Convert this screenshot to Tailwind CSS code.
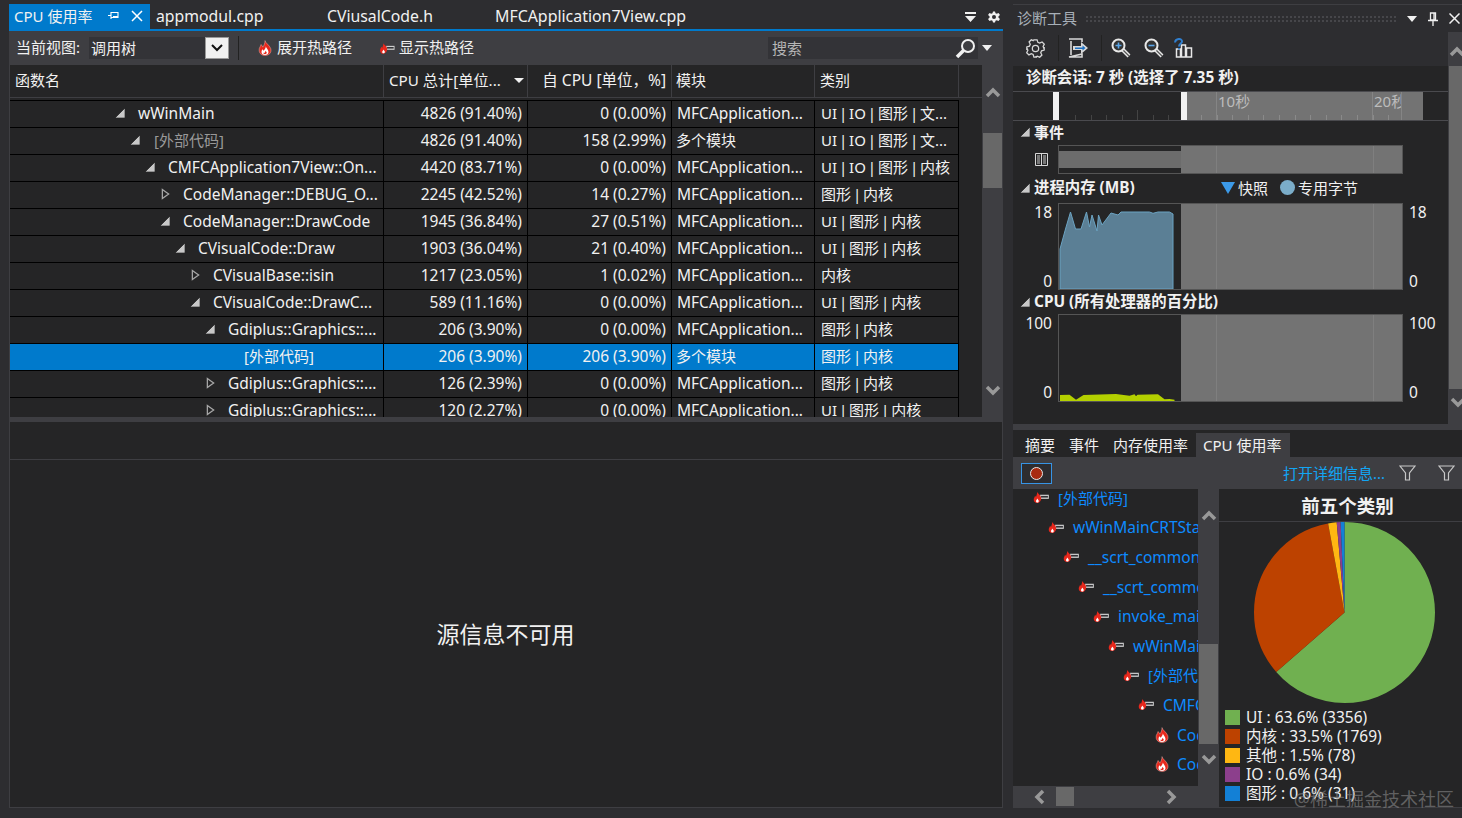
<!DOCTYPE html>
<html lang="zh-CN">
<head>
    <meta charset="UTF-8">
    <title>CPU 使用率</title>
    <script src="https://cdn.jsdelivr.net/npm/@tailwindcss/browser@4"></script>
</head>
<body class="bg-[#2d2d30] overflow-hidden">
    <svg width="0" height="0" class="absolute">
        <symbol id="flame" viewBox="0 0 16 18">
            <path d="M8 .5c.5 3 5 5 6.500 9 1.500 5-2 8-6.500 8S.5 14.500 1.500 9.500C2 8 3 7 3.500 5c1 1 1.500 2 2 3 1.500-2 2.500-4.500 2.500-7.500z" fill="#e8281c" stroke="#f0c4bc" stroke-width=".5"/>
            <path d="M9 7c0 2 3 3.500 3 6.500 0 2-1.500 3.500-4 3.500S4 15.500 4 13.500c0-1 .5-2 1-3l1.500 1.500C7.500 11 9 9 9 7z" fill="#fff"/>
            <path d="M8.500 12c.5 1 1.500 1.500 1.500 2.500 0 1-1 1.500-2 1.500s-2-.5-2-1.500c.5 0 1 .5 1.500 0 .5-1 1-1.500 1-2.500z" fill="#e8281c"/>
        </symbol>
        <symbol id="hot" viewBox="0 0 17 12">
            <path d="M7 3h9.500v4.500H7z" fill="#d0d0d0"/>
            <path d="M8 4.300h7.500v1.800H8z" fill="#333337"/>
            <path d="M4 0c.5 2 3.500 3 4 6 .5 3-1.500 6-4 6S-.5 10 .2 7c.3-1 1-2 1.300-3 .5.5.8 1 1 1.500C3 4 3.700 2 4 0z" fill="#e8281c"/>
            <path d="M4 7c.3 1 1.500 1.500 1.500 2.800C5.500 11 4.800 11.500 4 11.500S2.500 11 2.500 9.800C2.500 9 3.700 8 4 7z" fill="#fff"/>
        </symbol>
        <symbol id="open" viewBox="0 0 10 10"><path d="M0 10 10 0v10z" fill="#c8c8c8" stroke="#111" stroke-width=".6"/></symbol>
        <symbol id="closed" viewBox="0 0 10 12"><path d="M1.500 1 8.500 6 1.500 11z" fill="none" stroke="#a8a8a8" stroke-width="1.400"/></symbol>
        <symbol id="up" viewBox="0 0 16 11"><path d="M2 9 8 3l6 6" fill="none" stroke="#999" stroke-width="3.500"/></symbol>
        <symbol id="down" viewBox="0 0 16 11"><path d="M2 2l6 6 6-6" fill="none" stroke="#999" stroke-width="3.500"/></symbol>
        <symbol id="funnel" viewBox="0 0 17 16"><path d="M1 1h15l-5.500 7v7h-4V8z" fill="none" stroke="#c8c8c8" stroke-width="1.200"/></symbol>
    </svg>

    <div class="flex w-[1462px] h-[818px] pt-1 gap-[10px] font-['Noto_Sans','Noto_Sans_CJK_SC',sans-serif] text-[15.5px] leading-5 text-[#f1f1f1]">

        <!-- Left document panel -->
        <div class="ml-[9px] w-[994px] h-[804px] flex flex-col">
            <!-- Tabs -->
            <div class="flex items-center h-[25px] shrink-0 relative">
                <div class="flex items-center w-[141px] h-full bg-[#007acc] pl-[5px] pb-[2px]">
                    <span class="w-[94px] text-[15px]">CPU 使用率</span>
                    <svg class="w-[11px] h-[11px] mr-[12px]" viewBox="0 0 11 11"><path d="M0 5.500h3M3 2.500h7v5H3zM3 2v7M5 6.500h5" fill="none" stroke="#fff" stroke-width="1.100"/></svg>
                    <svg class="w-3 h-3" viewBox="0 0 12 12"><path d="M1 1l10 10M11 1 1 11" stroke="#fff" stroke-width="1.500"/></svg>
                </div>
                <span class="ml-[6px] w-[171px] text-[15.8px] pb-[2px]">appmodul.cpp</span>
                <span class="w-[168px] text-[15.8px] pb-[2px]">CViusalCode.h</span>
                <span class="text-[15.9px] pb-[2px]">MFCApplication7View.cpp</span>
                <svg class="ml-auto w-[11px] h-[11px] mr-[12px]" viewBox="0 0 11 11"><path d="M0 1h11v2H0zM0 5h11L5.500 11z" fill="#f1f1f1"/></svg>
                <svg class="w-3 h-3 mr-[3px]" viewBox="0 0 24 24"><path fill-rule="evenodd" d="M10 1h4l1 3.500 2.500 1L21 4l3 4-3 2.500v3L24 16l-3 4-3.500-1.500-2.500 1L14 23h-4l-1-3.500-2.500-1L3 20l-3-4 3-2.500v-3L0 8l3-4 3.500 1.500 2.500-1zM12 8a4 4 0 1 0 0 8 4 4 0 0 0 0-8z" fill="#f1f1f1"/></svg>
            </div>
            <div class="h-[2px] shrink-0 bg-[#007acc]"></div>

            <!-- Toolbar -->
            <div class="flex items-center h-[34px] shrink-0 bg-[#3e3e42] pl-[7px] text-[15px]">
                <span class="w-[73px] pb-[2px]">当前视图:</span>
                <div class="flex items-center justify-between w-[140px] h-[22px] bg-[#333337] pl-[2px]">
                    <span class="pb-[1px]">调用树</span>
                    <span class="flex items-center justify-center w-6 h-[22px] bg-[#f1f1f1] border border-[#999]">
                        <svg class="w-[14px] h-[10px]" viewBox="0 0 14 10"><path d="M2 2l5 5 5-5" fill="none" stroke="#111" stroke-width="2"/></svg>
                    </span>
                </div>
                <div class="w-px h-[24px] bg-[#222] ml-[9px] mr-[19px]"></div>
                <svg class="w-[14px] h-[16px] mr-[5px] shrink-0"><use href="#flame"/></svg>
                <span class="w-[103px] pb-[2px]">展开热路径</span>
                <svg class="w-[15px] h-[11px] mr-[4px]"><use href="#hot"/></svg>
                <span class="w-[369px] pb-[2px]">显示热路径</span>
                <div class="flex items-center justify-between w-[210px] h-[22px] bg-[#333337] pl-[4px] pr-[2px] text-[#b5b5b5]">
                    <span class="pb-[1px]">搜索</span>
                    <svg class="w-[21px] h-[21px]" viewBox="0 0 21 21"><circle cx="13" cy="8" r="6" fill="#3e3e42" stroke="#f1f1f1" stroke-width="2"/><path d="M8.500 12.500 2 19" stroke="#f1f1f1" stroke-width="3.500"/></svg>
                </div>
                <svg class="w-[10px] h-[6px] ml-1" viewBox="0 0 10 6"><path d="M0 0h10L5 6z" fill="#f1f1f1"/></svg>
            </div>

            <!-- Call tree -->
            <div class="flex h-[352px] shrink-0">
                <div class="w-[973px] shrink-0 flex flex-col bg-[#252526] border-l border-[#3e3e42]">
                    <div class="grid grid-cols-[374px_144px_144px_143px_144px_1fr] h-[33px] shrink-0 border-b border-[#3e3e42] items-center text-[15px]">
                        <div class="h-full flex items-center pl-[5px] pb-[2px] border-r border-[#3e3e42]">函数名</div>
                        <div class="h-full flex items-center pl-[5px] pb-[2px] border-r border-[#3e3e42]"><span class="w-[125px] whitespace-nowrap text-[15.2px]">CPU 总计[单位...</span><svg class="w-[10px] h-[5px]" viewBox="0 0 10 5"><path d="M0 0h10L5 5z" fill="#f1f1f1"/></svg></div>
                        <div class="h-full flex items-center justify-end pr-[5px] pb-[2px] border-r border-[#3e3e42] whitespace-nowrap text-[15.5px]">自 CPU [单位，%]</div>
                        <div class="h-full flex items-center pl-[4px] pb-[2px] border-r border-[#3e3e42]">模块</div>
                        <div class="h-full flex items-center pl-[5px] pb-[2px] border-r border-[#3e3e42]">类别</div>
                        <div></div>
                    </div>
                    <div class="h-[2px] shrink-0"></div>
                    <div class="w-[949px] overflow-hidden flex-1 border-t border-black whitespace-nowrap">
                        <div class="grid grid-cols-[374px_144px_144px_143px_144px] h-[27px] border-b border-black items-center">
                            <div class="flex items-center h-full pb-[3px] border-r border-black pl-[105px]"><svg class="w-[10px] h-[10px] mr-[13px]"><use href="#open"/></svg>wWinMain</div>
                            <div class="h-full flex items-center justify-end pb-[3px] pr-[5px] border-r border-black">4826 (91.40%)</div>
                            <div class="h-full flex items-center justify-end pb-[3px] pr-[5px] border-r border-black">0 (0.00%)</div>
                            <div class="h-full flex items-center pb-[3px] pl-[5px] border-r border-black">MFCApplication...</div>
                            <div class="h-full flex items-center pb-[3px] pl-[6px] border-r border-black text-[15px] [word-spacing:-2px]">UI | IO | 图形 | 文...</div>
                        </div>
                        <div class="grid grid-cols-[374px_144px_144px_143px_144px] h-[27px] border-b border-black items-center">
                            <div class="flex items-center h-full pb-[3px] border-r border-black pl-[120px] text-[#999] text-[15px]"><svg class="w-[10px] h-[10px] mr-[14px]"><use href="#open"/></svg>[外部代码]</div>
                            <div class="h-full flex items-center justify-end pb-[3px] pr-[5px] border-r border-black">4826 (91.40%)</div>
                            <div class="h-full flex items-center justify-end pb-[3px] pr-[5px] border-r border-black">158 (2.99%)</div>
                            <div class="h-full flex items-center pb-[3px] pl-[4px] border-r border-black text-[15px]">多个模块</div>
                            <div class="h-full flex items-center pb-[3px] pl-[6px] border-r border-black text-[15px] [word-spacing:-2px]">UI | IO | 图形 | 文...</div>
                        </div>
                        <div class="grid grid-cols-[374px_144px_144px_143px_144px] h-[27px] border-b border-black items-center">
                            <div class="flex items-center h-full pb-[3px] border-r border-black pl-[135px]"><svg class="w-[10px] h-[10px] mr-[13px]"><use href="#open"/></svg>CMFCApplication7View::On...</div>
                            <div class="h-full flex items-center justify-end pb-[3px] pr-[5px] border-r border-black">4420 (83.71%)</div>
                            <div class="h-full flex items-center justify-end pb-[3px] pr-[5px] border-r border-black">0 (0.00%)</div>
                            <div class="h-full flex items-center pb-[3px] pl-[5px] border-r border-black">MFCApplication...</div>
                            <div class="h-full flex items-center pb-[3px] pl-[6px] border-r border-black text-[15px] [word-spacing:-2px]">UI | IO | 图形 | 内核</div>
                        </div>
                        <div class="grid grid-cols-[374px_144px_144px_143px_144px] h-[27px] border-b border-black items-center">
                            <div class="flex items-center h-full pb-[3px] border-r border-black pl-[151px]"><svg class="w-[9px] h-[12px] mr-[13px]"><use href="#closed"/></svg>CodeManager::DEBUG_O...</div>
                            <div class="h-full flex items-center justify-end pb-[3px] pr-[5px] border-r border-black">2245 (42.52%)</div>
                            <div class="h-full flex items-center justify-end pb-[3px] pr-[5px] border-r border-black">14 (0.27%)</div>
                            <div class="h-full flex items-center pb-[3px] pl-[5px] border-r border-black">MFCApplication...</div>
                            <div class="h-full flex items-center pb-[3px] pl-[6px] border-r border-black text-[15px] [word-spacing:-2px]">图形 | 内核</div>
                        </div>
                        <div class="grid grid-cols-[374px_144px_144px_143px_144px] h-[27px] border-b border-black items-center">
                            <div class="flex items-center h-full pb-[3px] border-r border-black pl-[150px]"><svg class="w-[10px] h-[10px] mr-[13px]"><use href="#open"/></svg>CodeManager::DrawCode</div>
                            <div class="h-full flex items-center justify-end pb-[3px] pr-[5px] border-r border-black">1945 (36.84%)</div>
                            <div class="h-full flex items-center justify-end pb-[3px] pr-[5px] border-r border-black">27 (0.51%)</div>
                            <div class="h-full flex items-center pb-[3px] pl-[5px] border-r border-black">MFCApplication...</div>
                            <div class="h-full flex items-center pb-[3px] pl-[6px] border-r border-black text-[15px] [word-spacing:-2px]">UI | 图形 | 内核</div>
                        </div>
                        <div class="grid grid-cols-[374px_144px_144px_143px_144px] h-[27px] border-b border-black items-center">
                            <div class="flex items-center h-full pb-[3px] border-r border-black pl-[165px]"><svg class="w-[10px] h-[10px] mr-[13px]"><use href="#open"/></svg>CVisualCode::Draw</div>
                            <div class="h-full flex items-center justify-end pb-[3px] pr-[5px] border-r border-black">1903 (36.04%)</div>
                            <div class="h-full flex items-center justify-end pb-[3px] pr-[5px] border-r border-black">21 (0.40%)</div>
                            <div class="h-full flex items-center pb-[3px] pl-[5px] border-r border-black">MFCApplication...</div>
                            <div class="h-full flex items-center pb-[3px] pl-[6px] border-r border-black text-[15px] [word-spacing:-2px]">UI | 图形 | 内核</div>
                        </div>
                        <div class="grid grid-cols-[374px_144px_144px_143px_144px] h-[27px] border-b border-black items-center">
                            <div class="flex items-center h-full pb-[3px] border-r border-black pl-[181px]"><svg class="w-[9px] h-[12px] mr-[13px]"><use href="#closed"/></svg>CVisualBase::isin</div>
                            <div class="h-full flex items-center justify-end pb-[3px] pr-[5px] border-r border-black">1217 (23.05%)</div>
                            <div class="h-full flex items-center justify-end pb-[3px] pr-[5px] border-r border-black">1 (0.02%)</div>
                            <div class="h-full flex items-center pb-[3px] pl-[5px] border-r border-black">MFCApplication...</div>
                            <div class="h-full flex items-center pb-[3px] pl-[6px] border-r border-black text-[15px]">内核</div>
                        </div>
                        <div class="grid grid-cols-[374px_144px_144px_143px_144px] h-[27px] border-b border-black items-center">
                            <div class="flex items-center h-full pb-[3px] border-r border-black pl-[180px]"><svg class="w-[10px] h-[10px] mr-[13px]"><use href="#open"/></svg>CVisualCode::DrawC...</div>
                            <div class="h-full flex items-center justify-end pb-[3px] pr-[5px] border-r border-black">589 (11.16%)</div>
                            <div class="h-full flex items-center justify-end pb-[3px] pr-[5px] border-r border-black">0 (0.00%)</div>
                            <div class="h-full flex items-center pb-[3px] pl-[5px] border-r border-black">MFCApplication...</div>
                            <div class="h-full flex items-center pb-[3px] pl-[6px] border-r border-black text-[15px] [word-spacing:-2px]">UI | 图形 | 内核</div>
                        </div>
                        <div class="grid grid-cols-[374px_144px_144px_143px_144px] h-[27px] border-b border-black items-center">
                            <div class="flex items-center h-full pb-[3px] border-r border-black pl-[195px]"><svg class="w-[10px] h-[10px] mr-[13px]"><use href="#open"/></svg>Gdiplus::Graphics::...</div>
                            <div class="h-full flex items-center justify-end pb-[3px] pr-[5px] border-r border-black">206 (3.90%)</div>
                            <div class="h-full flex items-center justify-end pb-[3px] pr-[5px] border-r border-black">0 (0.00%)</div>
                            <div class="h-full flex items-center pb-[3px] pl-[5px] border-r border-black">MFCApplication...</div>
                            <div class="h-full flex items-center pb-[3px] pl-[6px] border-r border-black text-[15px] [word-spacing:-2px]">图形 | 内核</div>
                        </div>
                        <div class="grid grid-cols-[374px_144px_144px_143px_144px] h-[27px] border-b border-black items-center bg-[#007acc]">
                            <div class="flex items-center h-full pb-[3px] border-r border-black pl-[234px] text-[15px]">[外部代码]</div>
                            <div class="h-full flex items-center justify-end pb-[3px] pr-[5px] border-r border-black">206 (3.90%)</div>
                            <div class="h-full flex items-center justify-end pb-[3px] pr-[5px] border-r border-black">206 (3.90%)</div>
                            <div class="h-full flex items-center pb-[3px] pl-[4px] border-r border-black text-[15px]">多个模块</div>
                            <div class="h-full flex items-center pb-[3px] pl-[6px] border-r border-black text-[15px] [word-spacing:-2px]">图形 | 内核</div>
                        </div>
                        <div class="grid grid-cols-[374px_144px_144px_143px_144px] h-[27px] border-b border-black items-center">
                            <div class="flex items-center h-full pb-[3px] border-r border-black pl-[196px]"><svg class="w-[9px] h-[12px] mr-[13px]"><use href="#closed"/></svg>Gdiplus::Graphics::...</div>
                            <div class="h-full flex items-center justify-end pb-[3px] pr-[5px] border-r border-black">126 (2.39%)</div>
                            <div class="h-full flex items-center justify-end pb-[3px] pr-[5px] border-r border-black">0 (0.00%)</div>
                            <div class="h-full flex items-center pb-[3px] pl-[5px] border-r border-black">MFCApplication...</div>
                            <div class="h-full flex items-center pb-[3px] pl-[6px] border-r border-black text-[15px] [word-spacing:-2px]">图形 | 内核</div>
                        </div>
                        <div class="grid grid-cols-[374px_144px_144px_143px_144px] h-[27px] border-b border-black items-center">
                            <div class="flex items-center h-full pb-[3px] border-r border-black pl-[196px]"><svg class="w-[9px] h-[12px] mr-[13px]"><use href="#closed"/></svg>Gdiplus::Graphics::...</div>
                            <div class="h-full flex items-center justify-end pb-[3px] pr-[5px] border-r border-black">120 (2.27%)</div>
                            <div class="h-full flex items-center justify-end pb-[3px] pr-[5px] border-r border-black">0 (0.00%)</div>
                            <div class="h-full flex items-center pb-[3px] pl-[5px] border-r border-black">MFCApplication...</div>
                            <div class="h-full flex items-center pb-[3px] pl-[6px] border-r border-black text-[15px] [word-spacing:-2px]">UI | 图形 | 内核</div>
                        </div>
                    </div>
                </div>
                <!-- Scrollbar -->
                <div class="w-[21px] bg-[#3e3e42] flex flex-col items-center">
                    <svg class="w-4 h-[11px] mt-[22px] shrink-0"><use href="#up"/></svg>
                    <div class="w-[19px] h-[55px] bg-[#686868] mt-[35px] shrink-0"></div>
                    <svg class="w-4 h-[11px] mt-[197px] shrink-0"><use href="#down"/></svg>
                </div>
            </div>

            <!-- Source panel -->
            <div class="h-[5px] shrink-0 bg-[#3e3e42]"></div>
            <div class="flex-1 flex flex-col bg-[#252526] border-l border-r border-b border-[#3e3e42]">
                <div class="h-[38px] shrink-0 border-b border-[#3e3e42]"></div>
                <div class="flex-1 flex items-center justify-center text-[23px] pt-[1px] pr-[1px]">源信息不可用</div>
            </div>
        </div>

        <!-- Right diagnostics panel -->
        <div class="w-[449px] h-[804px] flex flex-col">
            <div class="flex items-center h-[28px] shrink-0 border-t border-[#3e3e42] pl-1 text-[#a8b0b8] text-[15px]">
                <span class="w-[68px] pb-[2px]">诊断工具</span>
                <div class="w-[311px] h-[7px] bg-[radial-gradient(#46464a_1px,transparent_1px)] bg-[length:4px_4px]"></div>
                <svg class="w-[10px] h-[6px] ml-[11px]" viewBox="0 0 10 6"><path d="M0 0h10L5 6z" fill="#f1f1f1"/></svg>
                <svg class="w-[10px] h-[14px] ml-[11px]" viewBox="0 0 10 14"><path d="M2.500 1h5v7h-5zM0 8.500h10M5 9v5M6 1v7" fill="none" stroke="#f1f1f1" stroke-width="1.300"/></svg>
                <svg class="w-[11px] h-[11px] ml-[11px]" viewBox="0 0 11 11"><path d="M.5.500l10 10M10.500.500l-10 10" stroke="#f1f1f1" stroke-width="1.500"/></svg>
            </div>

            <div class="flex h-[392px] shrink-0">
                <div class="w-[435px] flex flex-col">
                    <!-- Diagnostics toolbar -->
                    <div class="flex items-center h-[34px] shrink-0 pl-[13px] pb-[2px]">
                        <svg class="w-[19px] h-[19px]" viewBox="0 0 24 24"><path fill-rule="evenodd" d="M10 1h4l1 3.200 2.300 1 3-1.500 2.800 2.800-1.500 3 1 2.300L23 10v4l-3.400 1-1 2.300 1.500 3-2.800 2.800-3-1.500-2.300 1L14 23h-4l-1-3.400-2.300-1-3 1.500-2.800-2.800 1.500-3-1-2.300L1 14v-4l3.400-1 1-2.300-1.500-3 2.800-2.800 3 1.500L9 2z" fill="none" stroke="#d8d8d8" stroke-width="1.600"/><circle cx="12" cy="12" r="4" fill="none" stroke="#d8d8d8" stroke-width="1.600"/></svg>
                        <div class="w-px h-[26px] bg-[#222] ml-[13px] mr-[9px]"></div>
                        <svg class="w-[20px] h-[20px]" viewBox="0 0 20 20"><path d="M1 1h13v3M14 16v3H1zM3 3v14" fill="none" stroke="#d8d8d8" stroke-width="1.600"/><path d="M5 8h8V4l7 6-7 6v-4H5z" fill="#d8d8d8"/><path d="M7 9.500h7.500V7.500l3 2.500-3 2.500v-1.500H7z" fill="#1b6fc2"/></svg>
                        <div class="w-px h-[26px] bg-[#222] ml-[13px] mr-[9px]"></div>
                        <svg class="w-[20px] h-[20px]" viewBox="0 0 20 20"><path d="M11.500 11.500 18 18" stroke="#e8e8e8" stroke-width="4"/><path d="M12 12l6 6" stroke="#555" stroke-width="1.200"/><circle cx="7.500" cy="7.500" r="6" fill="#333" stroke="#e8e8e8" stroke-width="2"/><path d="M4.500 7.500h6M7.500 4.500v6" stroke="#5aa5e8" stroke-width="1.600"/></svg>
                        <svg class="w-[20px] h-[20px] ml-[13px]" viewBox="0 0 20 20"><path d="M11.500 11.500 18 18" stroke="#e8e8e8" stroke-width="4"/><path d="M12 12l6 6" stroke="#555" stroke-width="1.200"/><circle cx="7.500" cy="7.500" r="6" fill="#333" stroke="#e8e8e8" stroke-width="2"/><path d="M4.500 7.500h6" stroke="#5aa5e8" stroke-width="1.600"/></svg>
                        <svg class="w-[20px] h-[20px] ml-[10px]" viewBox="0 0 20 20"><path d="M2.500 11h4v8h-4zM7.500 7h4v12h-4zM12.500 10h5v9h-5z" fill="#2d2d30" stroke="#e8e8e8" stroke-width="1.500"/><path d="M1 4.500C1.500 0 8 0 8 3.500 8 5.500 5 5.500 5 8.500M5 10v1.500" fill="none" stroke="#2f7fd0" stroke-width="2"/></svg>
                    </div>
                    <div class="h-[25px] shrink-0 bg-[#252526] pl-[13px] pb-[2px] flex items-center font-bold text-[15.4px]">诊断会话: 7 秒 (选择了 7.35 秒)</div>

                    <div class="flex-1 flex flex-col bg-[#252526]">
                        <!-- Ruler -->
                        <div class="h-[30px] shrink-0 border-y border-[#4a4a4e] flex pl-[40px]">
                            <div class="w-[6px] bg-[#f1f1f1]"></div>
                            <div class="w-[122px] flex items-end justify-between pl-[16px] pr-[12px]">
                                <span class="w-px h-[5px] bg-[#444]"></span><span class="w-px h-[5px] bg-[#444]"></span><span class="w-px h-[5px] bg-[#444]"></span><span class="w-px h-[5px] bg-[#444]"></span><span class="w-px h-[10px] bg-[#444]"></span><span class="w-px h-[5px] bg-[#444]"></span><span class="w-px h-[5px] bg-[#444]"></span>
                            </div>
                            <div class="w-[6px] bg-[#f1f1f1]"></div>
                            <div class="relative w-[236px] bg-[#737373] flex text-[#bcbcbc] text-[15px] leading-[18px]">
                                <div class="w-[30px] border-r border-[#858585]"></div>
                                <div class="w-[156px] pl-[1px] border-r border-[#858585]">10秒</div>
                                <div class="w-[29px] pl-[1px] border-r border-[#858585] overflow-hidden whitespace-nowrap">20秒</div>
                                <div class="absolute left-[14px] bottom-0 w-[202px] h-[5px] bg-[repeating-linear-gradient(to_right,#8a8a8a_0,#8a8a8a_1px,transparent_1px,transparent_15.6px)]"></div>
                            </div>
                        </div>

                        <div class="flex items-center h-[24px] shrink-0 pl-[7px] pb-[2px] font-bold text-[15px]"><svg class="w-[10px] h-[10px] mr-[4px]"><use href="#open"/></svg>事件</div>
                        <div class="flex h-[29px] shrink-0">
                            <div class="w-[45px] flex justify-end items-center pr-[10px]">
                                <svg class="w-[13px] h-[13px]" viewBox="0 0 13 13"><path d="M.5.500h12v12H.5zM6.500.500v12" fill="none" stroke="#d8d8d8"/><path d="M2 2h3v9H2zM8 2h3v9H8z" fill="#777"/></svg>
                            </div>
                            <div class="w-[345px] flex border border-[#555]">
                                <div class="w-[122px] flex items-center"><div class="w-full h-[17px] bg-[#6c6c6c]"></div></div>
                                <div class="flex-1 bg-[#737373] flex">
                                    <div class="w-[36px] border-r border-[#7f7f7f]"></div>
                                    <div class="w-[157px] border-r border-[#7f7f7f]"></div>
                                </div>
                            </div>
                        </div>

                        <div class="flex items-center h-[29px] shrink-0 pl-[7px] pb-[2px] text-[15px]">
                            <svg class="w-[10px] h-[10px] mr-[4px] mt-[1px]"><use href="#open"/></svg>
                            <span class="font-bold w-[187px] text-[15.4px]">进程内存 (MB)</span>
                            <svg class="w-[14px] h-[12px] mr-[3px]" viewBox="0 0 14 12"><path d="M0 0h14L7 12z" fill="#3c9ae8"/></svg>
                            <span class="w-[42px]">快照</span>
                            <span class="w-[15px] h-[15px] rounded-full bg-[#7badc9] mr-[3px]"></span>
                            <span>专用字节</span>
                        </div>
                        <div class="flex h-[87px] shrink-0 items-start">
                            <div class="w-[39px] h-[89px] -mt-[1px] flex flex-col justify-between items-end"><span>18</span><span>0</span></div>
                            <div class="w-[345px] h-[87px] ml-[6px] flex border border-[#555]">
                                <svg class="w-[122px] h-[85px]" viewBox="0 0 122 85"><path d="M1 85V45L6.500 25 11.500 8 16.500 25H22L27.500 8 30.500 23 33 11 38 27 39.500 11 43 21 52 9 59 11 62 8H90.500L94 9.300 99 8H110.500L114 10V85z" fill="#5b7f95" stroke="#6ba3c2" stroke-width="1"/></svg>
                                <div class="flex-1 bg-[#737373] flex">
                                    <div class="w-[36px] border-r border-[#7f7f7f]"></div>
                                    <div class="w-[157px] border-r border-[#7f7f7f]"></div>
                                </div>
                            </div>
                            <div class="h-[89px] -mt-[1px] ml-[6px] flex flex-col justify-between"><span>18</span><span>0</span></div>
                        </div>

                        <div class="flex items-center h-[24px] shrink-0 pl-[7px] font-bold text-[15.4px]"><svg class="w-[10px] h-[10px] mr-[4px]"><use href="#open"/></svg>CPU (所有处理器的百分比)</div>
                        <div class="flex h-[88px] shrink-0 items-start">
                            <div class="w-[39px] h-[89px] -mt-[1px] flex flex-col justify-between items-end"><span>100</span><span>0</span></div>
                            <div class="w-[345px] h-[88px] ml-[6px] flex border border-[#555]">
                                <svg class="w-[122px] h-[86px]" viewBox="0 0 122 86"><path d="M1 86V80L10.500 79.700 17 84.700 24.500 80 57 79 70.500 80.700 75.500 79.300 77 81.300 78.500 79.700 99 79.300 105.500 84.300 110.500 84 115.500 84.700V86z" fill="#b4d000"/></svg>
                                <div class="flex-1 bg-[#737373] flex">
                                    <div class="w-[36px] border-r border-[#7f7f7f]"></div>
                                    <div class="w-[157px] border-r border-[#7f7f7f]"></div>
                                </div>
                            </div>
                            <div class="h-[89px] -mt-[1px] ml-[6px] flex flex-col justify-between"><span>100</span><span>0</span></div>
                        </div>
                    </div>
                </div>
                <!-- Scrollbar -->
                <div class="w-[14px] bg-[#3e3e42] flex flex-col items-start overflow-hidden">
                    <svg class="w-4 h-[11px] mt-[14px] ml-[1px] shrink-0"><use href="#up"/></svg>
                    <div class="w-[13px] h-[323px] bg-[#686868] mt-[9px] ml-[1px] shrink-0"></div>
                    <svg class="w-4 h-[11px] mt-[8px] ml-[2px] shrink-0"><use href="#down"/></svg>
                </div>
            </div>

            <div class="h-[6px] shrink-0 bg-[#3e3e42]"></div>

            <!-- Lower tabs -->
            <div class="flex items-end h-[27px] shrink-0 bg-[#252526] pl-3 text-[15px]">
                <span class="w-[44px] h-[24px] flex items-center pb-[1px]">摘要</span>
                <span class="w-[44px] h-[24px] flex items-center pb-[1px]">事件</span>
                <span class="w-[83px] h-[24px] flex items-center pb-[1px]">内存使用率</span>
                <span class="w-[94px] h-[24px] flex items-center pl-[7px] pb-[1px] bg-[#3e3e42]">CPU 使用率</span>
            </div>
            <div class="flex items-center h-[32px] shrink-0 bg-[#3e3e42] pl-2">
                <div class="flex items-center justify-center w-[31px] h-[21px] bg-[#2d2d30] border border-[#3794e5]">
                    <span class="w-[13px] h-[13px] rounded-full bg-[#a82a10] border border-[#e8e8e8]"></span>
                </div>
                <span class="ml-[231px] w-[116px] text-[#12a5f4] text-[15px]">打开详细信息...</span>
                <svg class="w-[17px] h-[16px]"><use href="#funnel"/></svg>
                <svg class="w-[17px] h-[16px] ml-[22px]"><use href="#funnel"/></svg>
            </div>

            <!-- Hot path + chart -->
            <div class="flex h-[319px] shrink-0 border-b border-[#3e3e42]">
                <div class="w-[206px] flex flex-col shrink-0">
                    <div class="flex h-[298px]">
                        <div class="w-[185px] bg-[#252526] overflow-hidden whitespace-nowrap text-[#0e8bff] flex flex-col">
                            <div class="flex items-center h-[29.6px] shrink-0 pl-[20px] -mt-[6px] text-[15px]"><svg class="w-[17px] h-[11px] mr-2 shrink-0"><use href="#hot"/></svg>[外部代码]</div>
                            <div class="flex items-center h-[29.6px] shrink-0 pl-[35px]"><svg class="w-[17px] h-[11px] mr-2 shrink-0"><use href="#hot"/></svg>wWinMainCRTStartup</div>
                            <div class="flex items-center h-[29.6px] shrink-0 pl-[50px]"><svg class="w-[17px] h-[11px] mr-2 shrink-0"><use href="#hot"/></svg>__scrt_common_main</div>
                            <div class="flex items-center h-[29.6px] shrink-0 pl-[65px]"><svg class="w-[17px] h-[11px] mr-2 shrink-0"><use href="#hot"/></svg>__scrt_common_main_seh</div>
                            <div class="flex items-center h-[29.6px] shrink-0 pl-[80px]"><svg class="w-[17px] h-[11px] mr-2 shrink-0"><use href="#hot"/></svg>invoke_main</div>
                            <div class="flex items-center h-[29.6px] shrink-0 pl-[95px]"><svg class="w-[17px] h-[11px] mr-2 shrink-0"><use href="#hot"/></svg>wWinMain</div>
                            <div class="flex items-center h-[29.6px] shrink-0 pl-[110px] text-[15px]"><svg class="w-[17px] h-[11px] mr-2 shrink-0"><use href="#hot"/></svg>[外部代码]</div>
                            <div class="flex items-center h-[29.6px] shrink-0 pl-[125px]"><svg class="w-[17px] h-[11px] mr-2 shrink-0"><use href="#hot"/></svg>CMFCApplication7View</div>
                            <div class="flex items-center h-[29.6px] shrink-0 pl-[142px]"><svg class="w-[14px] h-[16px] mr-[8px] shrink-0"><use href="#flame"/></svg>CodeManager</div>
                            <div class="flex items-center h-[29.6px] shrink-0 pl-[142px]"><svg class="w-[14px] h-[16px] mr-[8px] shrink-0"><use href="#flame"/></svg>CodeManager</div>
                        </div>
                        <div class="w-[21px] bg-[#3e3e42] flex flex-col items-center">
                            <svg class="w-4 h-[11px] mt-[21px] shrink-0"><use href="#up"/></svg>
                            <div class="w-[19px] h-[100px] bg-[#686868] mt-[123px] shrink-0"></div>
                            <svg class="w-4 h-[11px] mt-[10px] shrink-0"><use href="#down"/></svg>
                        </div>
                    </div>
                    <div class="h-[21px] bg-[#3e3e42] flex items-center pl-[21px]">
                        <svg class="w-[11px] h-[16px]" viewBox="0 0 11 16"><path d="M9 2 3 8l6 6" fill="none" stroke="#999" stroke-width="3.500"/></svg>
                        <div class="w-[18px] h-[19px] bg-[#686868] ml-[11px]"></div>
                        <svg class="w-[11px] h-[16px] ml-[92px]" viewBox="0 0 11 16"><path d="M2 2l6 6-6 6" fill="none" stroke="#999" stroke-width="3.500"/></svg>
                    </div>
                </div>
                <div class="relative flex-1 flex flex-col bg-[#252526]">
                    <div class="h-[33px] shrink-0 border-b border-[#3e3e42] flex items-center justify-center pl-[14px] pt-[2px] font-bold text-[18.5px]">前五个类别</div>
                    <svg class="w-[181px] h-[181px] ml-[35px] shrink-0" viewBox="0 0 182 182">
                        <g fill="none" stroke-width="91" transform="rotate(-90 91 91)">
                            <circle cx="91" cy="91" r="45.500" pathLength="100" stroke="#70b050" stroke-dasharray="63.600 100"/>
                            <circle cx="91" cy="91" r="45.500" pathLength="100" stroke="#bd4200" stroke-dasharray="33.500 100" stroke-dashoffset="-63.600"/>
                            <circle cx="91" cy="91" r="45.500" pathLength="100" stroke="#ffb712" stroke-dasharray="1.500 100" stroke-dashoffset="-97.100"/>
                            <circle cx="91" cy="91" r="45.500" pathLength="100" stroke="#8c3f8c" stroke-dasharray="0.700 100" stroke-dashoffset="-98.600"/>
                            <circle cx="91" cy="91" r="45.500" pathLength="100" stroke="#1380d6" stroke-dasharray="0.700 100" stroke-dashoffset="-99.300"/>
                        </g>
                    </svg>
                    <div class="flex flex-col gap-[4px] pl-[6px] mt-[7px]">
                        <div class="flex items-center h-[15px] gap-[6px]"><span class="w-[15px] h-[15px] bg-[#70b050]"></span><span class="-mt-[1px]">UI : 63.6% (3356)</span></div>
                        <div class="flex items-center h-[15px] gap-[6px]"><span class="w-[15px] h-[15px] bg-[#bd4200]"></span><span class="-mt-[1px]">内核 : 33.5% (1769)</span></div>
                        <div class="flex items-center h-[15px] gap-[6px]"><span class="w-[15px] h-[15px] bg-[#ffb712]"></span><span class="-mt-[1px]">其他 : 1.5% (78)</span></div>
                        <div class="flex items-center h-[15px] gap-[6px]"><span class="w-[15px] h-[15px] bg-[#8c3f8c]"></span><span class="-mt-[1px]">IO : 0.6% (34)</span></div>
                        <div class="flex items-center h-[15px] gap-[6px]"><span class="w-[15px] h-[15px] bg-[#1380d6]"></span><span class="-mt-[1px]">图形 : 0.6% (31)</span></div>
                    </div>
                    <div class="absolute right-[8px] -bottom-[2px] text-[18px] text-[#8a8a8a]/60 whitespace-nowrap">@稀土掘金技术社区</div>
                </div>
            </div>
        </div>
    </div>
</body>
</html>
